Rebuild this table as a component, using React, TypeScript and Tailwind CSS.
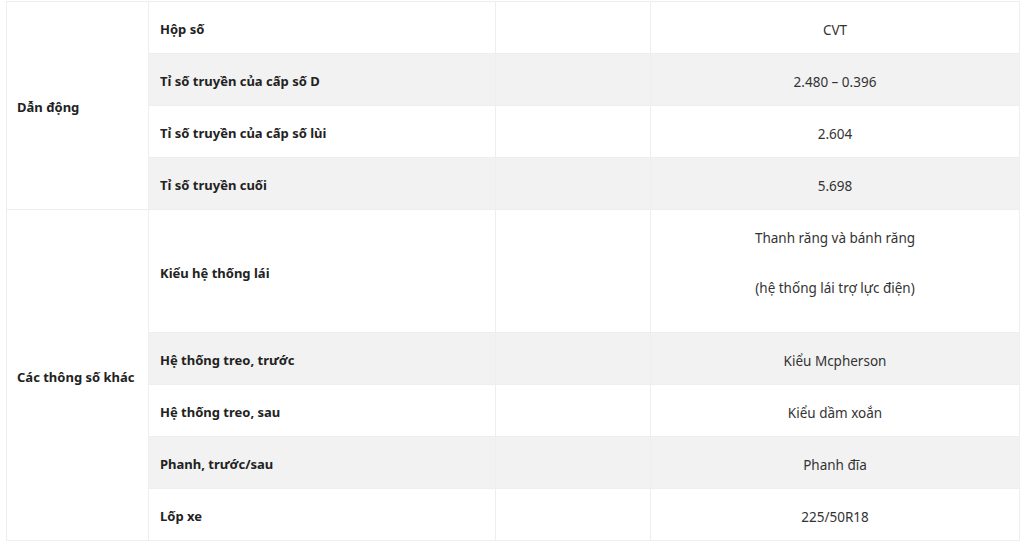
import React from 'react';

type Row = { label: string; value: string[]; tall?: boolean };

const groups: { title: string; rows: Row[] }[] = [
  {
    title: 'Dẫn động',
    rows: [
      { label: 'Hộp số', value: ['CVT'] },
      { label: 'Tỉ số truyền của cấp số D', value: ['2.480 – 0.396'] },
      { label: 'Tỉ số truyền của cấp số lùi', value: ['2.604'] },
      { label: 'Tỉ số truyền cuối', value: ['5.698'] },
    ],
  },
  {
    title: 'Các thông số khác',
    rows: [
      { label: 'Kiểu hệ thống lái', value: ['Thanh răng và bánh răng', '(hệ thống lái trợ lực điện)'], tall: true },
      { label: 'Hệ thống treo, trước', value: ['Kiểu Mcpherson'] },
      { label: 'Hệ thống treo, sau', value: ['Kiểu dầm xoắn'] },
      { label: 'Phanh, trước/sau', value: ['Phanh đĩa'] },
      { label: 'Lốp xe', value: ['225/50R18'] },
    ],
  },
];

export default function App() {
  let stripe = 0;
  return (
    <div className="w-[1024px] h-[544px] bg-white pl-[6px] pt-px overflow-hidden" style={{ fontFamily: '"Noto Sans", "Open Sans", sans-serif' }}>
      <table className="w-[1013px] table-fixed border-collapse leading-[20px] text-[#222]">
        <colgroup>
          <col className="w-[142px]" />
          <col className="w-[347px]" />
          <col className="w-[155px]" />
          <col className="w-[369px]" />
        </colgroup>
        <tbody>
          {groups.map((g) =>
            g.rows.map((r, i) => {
              const bg = stripe++ % 2 === 1 ? 'bg-[#f2f2f2]' : 'bg-white';
              return (
                <tr key={g.title + r.label} className={bg}>
                  {i === 0 && (
                    <td rowSpan={g.rows.length} className="bg-white border border-[#eeeeee] pl-[10px] pt-[3px] align-middle font-bold text-[13px] whitespace-nowrap">
                      {g.title}
                    </td>
                  )}
                  <td className={`border border-[#eeeeee] px-[11px] pt-[3px] font-bold text-[13px] align-middle ${r.tall ? 'h-[123px]' : 'h-[52px]'}`}>
                    {r.label}
                  </td>
                  <td className="border border-[#eeeeee]" />
                  <td className="border border-[#eeeeee] text-center text-[13.5px] text-[#333] align-top pt-[18px]">
                    {r.value.map((v, k) => (
                      <p key={v} className={k < r.value.length - 1 ? 'mb-[30px]' : ''}>
                        {v}
                      </p>
                    ))}
                  </td>
                </tr>
              );
            })
          )}
        </tbody>
      </table>
    </div>
  );
}
